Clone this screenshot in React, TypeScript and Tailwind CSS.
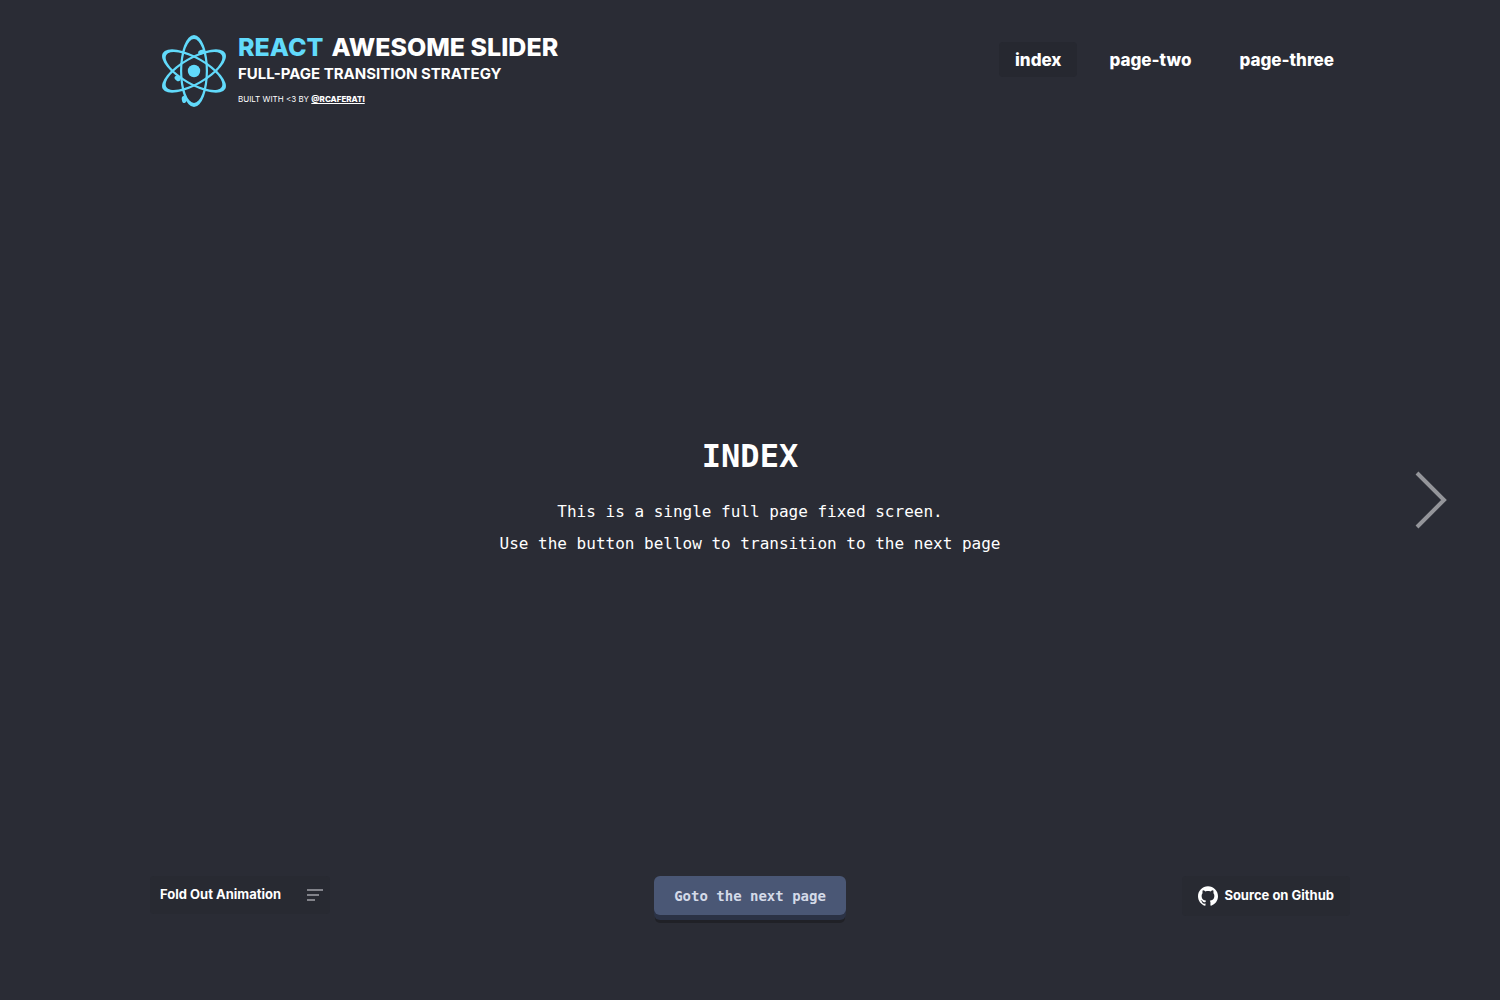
import { SiGithub } from "react-icons/si";

const orbit =
  "M45 9a14 36 0 0 1 0 72a14 36 0 0 1 0 -72zM45 13a11.8 32 0 0 0 0 64a11.8 32 0 0 0 0 -64z";

function Logo() {
  return (
    <svg viewBox="12 9 66 72" className="h-18 w-[66px] shrink-0 fill-[#61dafb]" aria-hidden="true">
      <path d={orbit} fillRule="evenodd" />
      <path d={orbit} fillRule="evenodd" transform="rotate(60 45 45)" />
      <path d={orbit} fillRule="evenodd" transform="rotate(-60 45 45)" />
      <circle cx="45" cy="45" r="6.2" />
      <ellipse cx="52.5" cy="26" rx="3.5" ry="2.2" transform="rotate(-25 52.5 26)" />
      <ellipse cx="28.5" cy="52.5" rx="3.3" ry="2.2" transform="rotate(40 28.5 52.5)" />
      <ellipse cx="35" cy="73.5" rx="2.2" ry="3.6" transform="rotate(-10 35 73.5)" />
    </svg>
  );
}

function Header() {
  return (
    <header className="mx-auto flex w-full max-w-[1200px] items-start justify-between pt-[35px]">
      <div className="flex items-start gap-[11px] pl-[11px]">
        <Logo />
        <div className="uppercase">
          <h1 className="flex gap-2 text-[25px] leading-[25px] font-extrabold">
            <span className="text-[#61dafb]">React</span>
            <span>Awesome Slider</span>
          </h1>
          <h2 className="text-[15px] leading-[27px] font-bold">Full-page transition strategy</h2>
          <p className="text-[8px] leading-6">
            Built with &lt;3 by{" "}
            <a href="#rcaferati" className="font-extrabold underline">@rcaferati</a>
          </p>
        </div>
      </div>
      <nav className="mt-[7px] flex gap-4 text-[17px] leading-[34px] font-extrabold">
        <a href="#index" aria-current="page" className="rounded bg-[#262830] px-4 pt-px">index</a>
        <a href="#page-two" className="px-4 pt-px">page-two</a>
        <a href="#page-three" className="px-4 pt-px">page-three</a>
      </nav>
    </header>
  );
}

function Footer() {
  return (
    <footer className="mx-auto grid w-full max-w-[1200px] grid-cols-3 items-start pb-[84px] text-[13px] font-bold">
      <div className="relative w-[180px]">
        <select aria-label="Animation" className="h-[38px] w-full appearance-none rounded bg-[#282a32] px-[10px] outline-none">
          <option>Fold Out Animation</option>
        </select>
        <svg viewBox="0 0 16 12" className="pointer-events-none absolute top-[13px] right-[7px] h-3 w-4 fill-[#82838a]" aria-hidden="true">
          <path d="M0 0h16v2H0zM0 5h12v2H0zM0 10h8v2H0z" />
        </svg>
      </div>
      <button className="h-[39px] justify-self-center rounded-md bg-[#4a5775] px-5 pt-0.5 font-['DejaVu_Sans_Mono',monospace] text-[14px] font-bold text-[#d4dae8] shadow-[0_5px_0_#2b3245,0_9px_0_-1px_#202127]">
        Goto the next page
      </button>
      <a href="#github" className="flex h-10 items-center gap-[6px] justify-self-end rounded bg-[#282a32] px-4">
        <SiGithub className="size-5" aria-hidden="true" />
        Source on Github
      </a>
    </footer>
  );
}

export default function App() {
  return (
    <div className="relative flex min-h-screen flex-col bg-[#2a2c35] font-[Inter,sans-serif] text-white">
      <Header />
      <main className="flex flex-1 flex-col items-center justify-center pt-2 text-center font-['DejaVu_Sans_Mono',monospace]">
        <h2 className="mb-5 text-[32px] leading-10 font-bold">INDEX</h2>
        <p className="text-[16px] leading-8">
          This is a single full page fixed screen.
          <br />
          Use the button bellow to transition to the next page
        </p>
      </main>
      <Footer />
      <button aria-label="Next page" className="absolute top-1/2 right-[50px] -translate-y-1/2">
        <svg viewBox="0 0 36 60" className="h-[60px] w-9 fill-none stroke-[#94959a]" strokeWidth="4">
          <path d="M3 3L30 30L3 57" />
        </svg>
      </button>
    </div>
  );
}
